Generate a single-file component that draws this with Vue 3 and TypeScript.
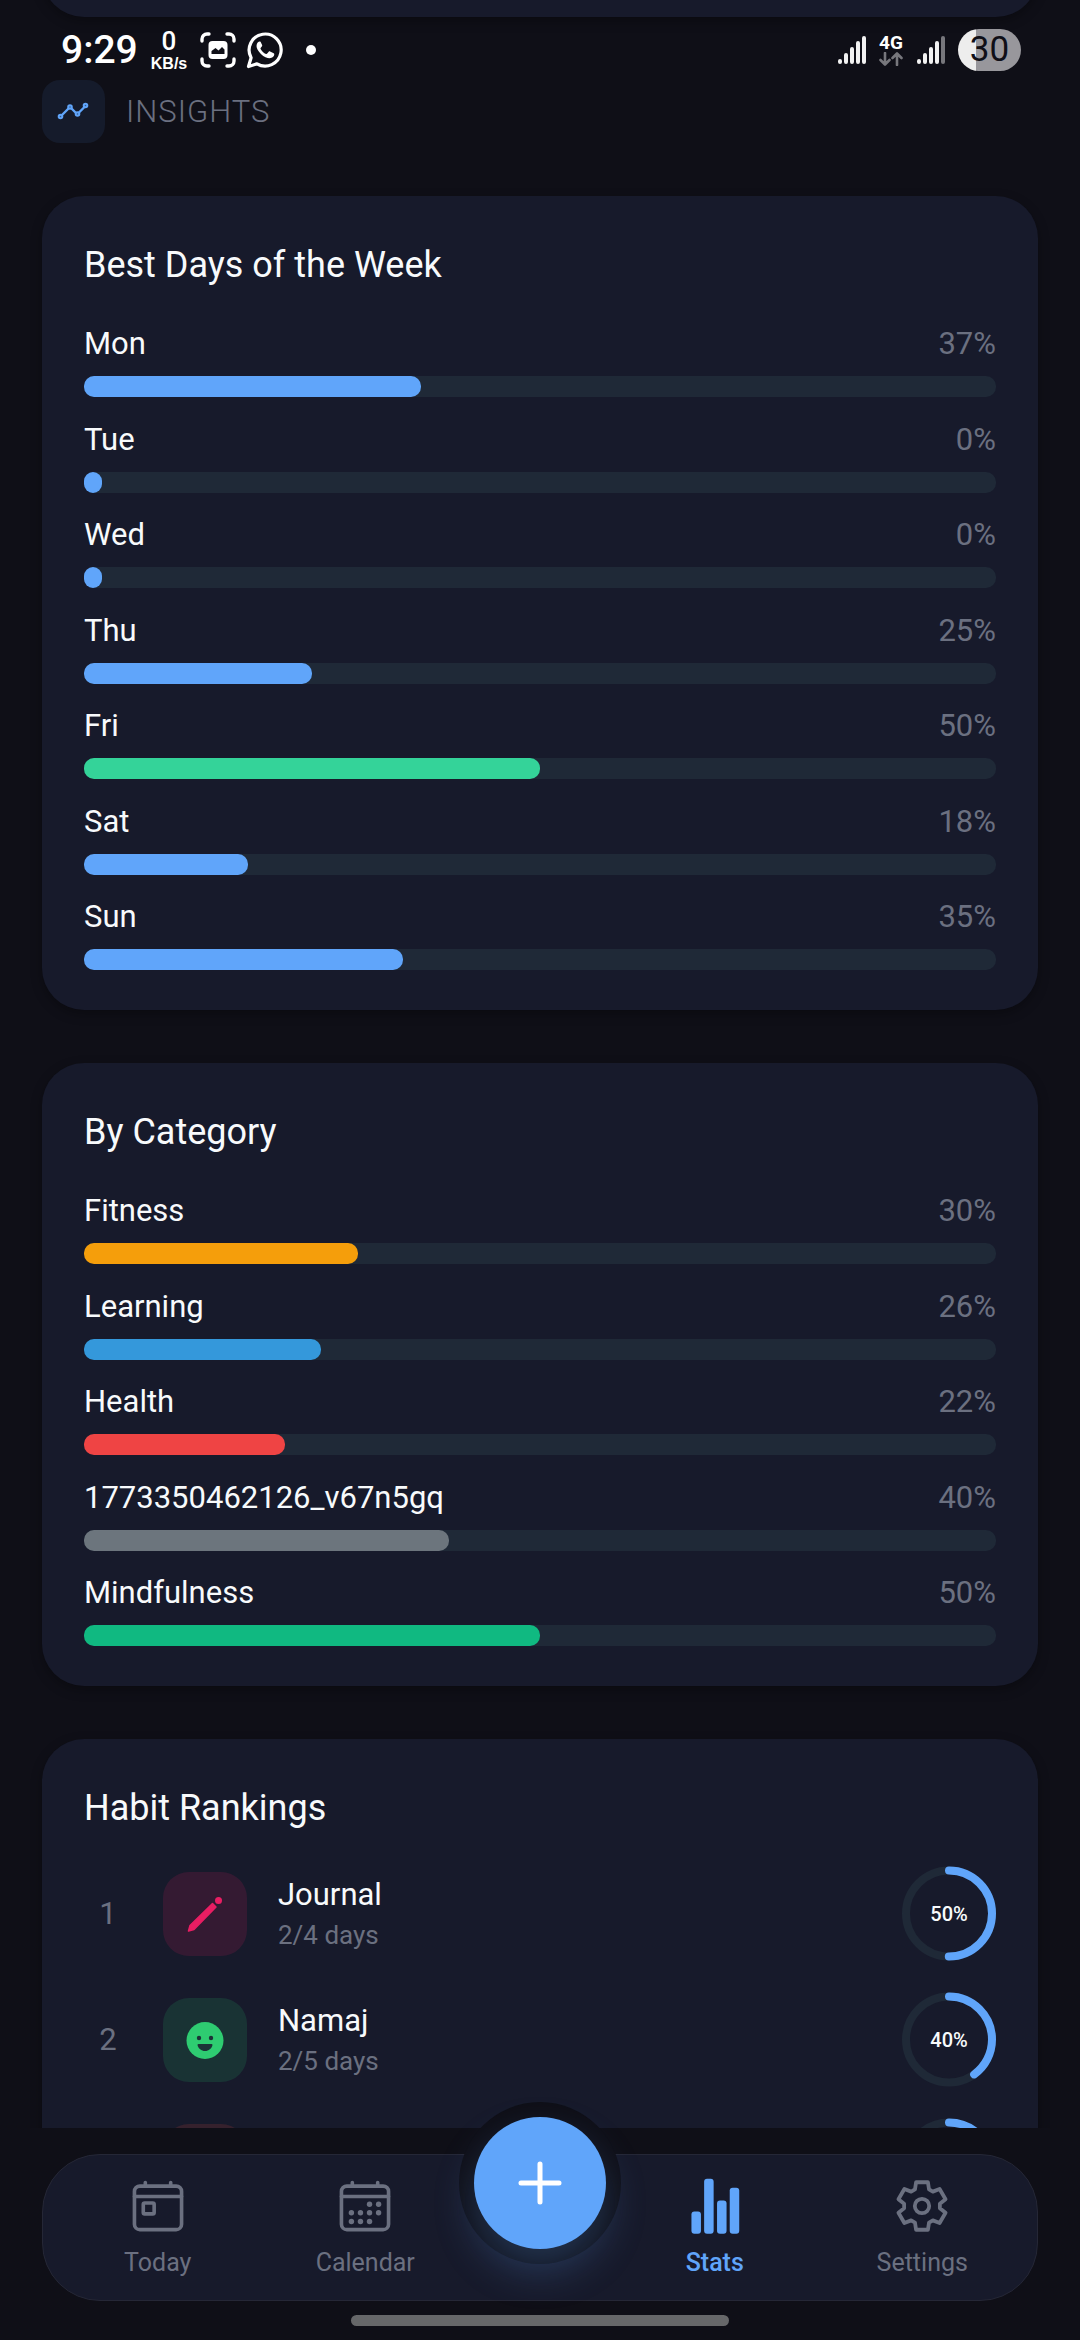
<script setup lang="ts">
interface Meter {
  label: string
  percent: number
  color: string
}

interface Habit {
  rank: number
  name: string
  detail: string
  percent: number
  tint: string
  icon: 'pencil' | 'smile' | 'none'
}

const weekdays: Meter[] = [
  { label: 'Mon', percent: 37, color: '#60a5fa' },
  { label: 'Tue', percent: 0, color: '#60a5fa' },
  { label: 'Wed', percent: 0, color: '#60a5fa' },
  { label: 'Thu', percent: 25, color: '#60a5fa' },
  { label: 'Fri', percent: 50, color: '#34d399' },
  { label: 'Sat', percent: 18, color: '#60a5fa' },
  { label: 'Sun', percent: 35, color: '#60a5fa' },
]

const categories: Meter[] = [
  { label: 'Fitness', percent: 30, color: '#f59e0b' },
  { label: 'Learning', percent: 26, color: '#3498db' },
  { label: 'Health', percent: 22, color: '#ef4444' },
  { label: '1773350462126_v67n5gq', percent: 40, color: '#6c757d' },
  { label: 'Mindfulness', percent: 50, color: '#10b981' },
]

const meterCards = [
  { title: 'Best Days of the Week', meters: weekdays },
  { title: 'By Category', meters: categories },
]

const habits: Habit[] = [
  { rank: 1, name: 'Journal', detail: '2/4 days', percent: 50, tint: 'rgba(233, 30, 99, 0.14)', icon: 'pencil' },
  { rank: 2, name: 'Namaj', detail: '2/5 days', percent: 40, tint: 'rgba(46, 204, 113, 0.14)', icon: 'smile' },
  { rank: 3, name: '', detail: '', percent: 33, tint: 'rgba(231, 76, 60, 0.15)', icon: 'none' },
]

// An empty day still shows a small stub of colour.
const barWidth = (percent: number): string => `${Math.max(percent, 2)}%`

const RING_LENGTH = 2 * Math.PI * 43
const ringDash = (percent: number): string => `${(RING_LENGTH * percent) / 100} ${RING_LENGTH}`

// Outline of a six-toothed cog centred on the origin.
const cogPoints: string = [0, 60, 120, 180, 240, 300]
  .flatMap((turn) =>
    [[-23, 18], [-14, 24.5], [14, 24.5], [23, 18]].map(([angle, radius]) => {
      const a = ((turn + angle) * Math.PI) / 180
      return `${(radius * Math.sin(a)).toFixed(2)},${(-radius * Math.cos(a)).toFixed(2)}`
    }),
  )
  .join(' ')
</script>

<template>
  <div class="app">
    <header class="status">
      <div class="status-side">
        <span class="clock">9:29</span>
        <span class="speed"><span class="speed-value">0</span><span class="speed-unit">KB/s</span></span>
        <svg class="capture" width="36" height="36" viewBox="0 0 36 36" aria-hidden="true">
          <g fill="none" stroke="#fff" stroke-width="3.4" stroke-linecap="round">
            <path d="M2 9V7a5 5 0 0 1 5-5h2M27 2h2a5 5 0 0 1 5 5v2M34 27v2a5 5 0 0 1-5 5h-2M9 34H7a5 5 0 0 1-5-5v-2" />
          </g>
          <rect x="8.500" y="9" width="19" height="18" rx="4" fill="#fff" />
          <path d="M11.500 22v-3l4-3 3 2.500 3.500-3.500 2.500 2.500V22z" fill="#0f0f17" />
        </svg>
        <svg class="chat" width="38" height="38" viewBox="0 0 38 38" aria-hidden="true">
          <path d="M2.500 35.500l2.600-8.800A16 16 0 1 1 11 32.800z" fill="none" stroke="#fff" stroke-width="3.200" stroke-linejoin="round" />
          <path d="M13.500 10.500c-.8 0-3 1.400-3 4.600 0 2.300 1.600 5.200 4.400 7.900 3 2.900 6.300 4.200 8.700 4.200 2.800 0 4.700-2 4.700-3.900 0-.6-.2-.9-.6-1.100l-3.600-1.800c-.6-.3-1-.2-1.400.3l-1.500 1.900c-.3.400-.7.500-1.200.3-2.100-.9-4.300-2.900-5.400-5-.2-.5-.2-.8.200-1.200l1.200-1.500c.3-.4.3-.8.100-1.300l-1.400-2.800c-.3-.5-.6-.6-1.200-.6z" fill="#fff" />
        </svg>
        <span class="dot"></span>
      </div>
      <div class="status-side">
        <svg width="29" height="30" viewBox="0 0 29 30" aria-hidden="true">
          <g stroke="#f2f2f2" stroke-width="4" stroke-linecap="round">
            <path d="M3 26v1M9 20v7M15 14v13M21 8v19M27 3v24" />
          </g>
        </svg>
        <span class="network">
          <span>4G</span>
          <svg width="24" height="14" viewBox="0 0 24 14" aria-hidden="true">
            <path d="M6 1v11M1.500 8L6 12.500 10.500 8M18 13V2M13.500 6L18 1.500 22.500 6" fill="none" stroke="#77777c" stroke-width="2.600" stroke-linecap="round" stroke-linejoin="round" />
          </svg>
        </span>
        <svg width="29" height="30" viewBox="0 0 29 30" aria-hidden="true">
          <g stroke="#f2f2f2" stroke-width="4" stroke-linecap="round">
            <path d="M3 26v1M9 20v7M15 14v13M21 8v19" />
            <path d="M27 3v24" stroke="#77777c" />
          </g>
        </svg>
        <span class="battery">30</span>
      </div>
    </header>

    <main class="scroll">
      <div class="card card-above"></div>

      <div class="section-head">
        <span class="section-icon">
          <svg width="63" height="63" viewBox="0 0 63 63" fill="#35598a" stroke="#60a5fa" stroke-width="2" aria-hidden="true">
            <path d="M20 35l6.500-6.500M29.500 28.500l4.500 4.500M37 32.500l5-5" stroke-width="2.400" stroke-linecap="round" />
            <circle cx="18.500" cy="36.500" r="1.800" />
            <circle cx="28" cy="27" r="1.800" />
            <circle cx="35.500" cy="34" r="1.800" />
            <circle cx="43.500" cy="25.500" r="1.800" />
          </svg>
        </span>
        <h1>INSIGHTS</h1>
      </div>

      <section v-for="card in meterCards" :key="card.title" class="card">
        <h2>{{ card.title }}</h2>
        <ul class="meters">
          <li v-for="meter in card.meters" :key="meter.label" class="meter">
            <div class="meter-text">
              <span>{{ meter.label }}</span>
              <span class="muted">{{ meter.percent }}%</span>
            </div>
            <div class="track" role="progressbar" :aria-label="meter.label" :aria-valuenow="meter.percent">
              <div class="fill" :style="{ width: barWidth(meter.percent), background: meter.color }"></div>
            </div>
          </li>
        </ul>
      </section>

      <section class="card">
        <h2>Habit Rankings</h2>
        <ol class="habits">
          <li v-for="habit in habits" :key="habit.rank" class="habit">
            <span class="rank muted">{{ habit.name ? habit.rank : '' }}</span>
            <span class="tile" :style="{ background: habit.tint }">
              <svg v-if="habit.icon === 'pencil'" width="84" height="84" viewBox="0 0 84 84" fill="#e91e63" aria-hidden="true">
                <path d="M25.500 59l1.500-5.500L49.500 31.500l3.500 3.500L31 57.500z" stroke="#e91e63" stroke-width="1.500" stroke-linejoin="round" />
                <circle cx="55.500" cy="28.500" r="3.500" />
              </svg>
              <svg v-else-if="habit.icon === 'smile'" width="84" height="84" viewBox="0 0 84 84" aria-hidden="true">
                <circle cx="42" cy="42.500" r="18.500" fill="#2ecc71" />
                <g fill="#1c3337">
                  <circle cx="36" cy="40" r="2.200" />
                  <circle cx="48" cy="40" r="2.200" />
                  <path d="M35.500 46h13a1 1 0 0 1 1 1c-.8 3.500-3.800 6-7.500 6s-6.700-2.500-7.500-6a1 1 0 0 1 1-1z" />
                </g>
              </svg>
            </span>
            <div class="habit-text">
              <span class="habit-name">{{ habit.name }}</span>
              <span class="habit-detail muted">{{ habit.detail }}</span>
            </div>
            <div class="ring">
              <svg width="94" height="95" viewBox="0 0 94 95" fill="none" stroke-width="8" aria-hidden="true">
                <circle cx="47" cy="47.500" r="43" stroke="#1f2937" />
                <circle cx="47" cy="47.500" r="43" stroke="#60a5fa" stroke-linecap="round" :stroke-dasharray="ringDash(habit.percent)" transform="rotate(-90 47 47.500)" />
              </svg>
              <span v-if="habit.name" class="ring-text">{{ habit.percent }}%</span>
            </div>
          </li>
        </ol>
      </section>
    </main>

    <footer class="bottom">
      <nav class="tabs">
        <a href="#today" class="tab">
          <svg width="58" height="58" viewBox="0 0 512 512" fill="none" stroke="currentColor" stroke-width="32" stroke-linejoin="round" aria-hidden="true">
            <rect x="48" y="80" width="416" height="384" rx="48" />
            <rect x="126" y="230" width="96" height="96" rx="13" />
            <path d="M144 48v32M368 48v32M464 172H48" stroke-linecap="round" />
          </svg>
          <span>Today</span>
        </a>
        <a href="#calendar" class="tab">
          <svg width="58" height="58" viewBox="0 0 512 512" fill="none" stroke="currentColor" stroke-width="32" stroke-linejoin="round" aria-hidden="true">
            <rect x="48" y="80" width="416" height="384" rx="48" />
            <path d="M144 48v32M368 48v32M464 172H48" stroke-linecap="round" />
            <g fill="currentColor" stroke="none">
              <circle cx="296" cy="240" r="24" /><circle cx="376" cy="240" r="24" />
              <circle cx="136" cy="316" r="24" /><circle cx="216" cy="316" r="24" /><circle cx="296" cy="316" r="24" /><circle cx="376" cy="316" r="24" />
              <circle cx="136" cy="392" r="24" /><circle cx="216" cy="392" r="24" /><circle cx="296" cy="392" r="24" />
            </g>
          </svg>
          <span>Calendar</span>
        </a>
        <div class="add-slot">
          <div class="add-rim">
            <button type="button" class="add" aria-label="Add habit">
              <svg width="44" height="44" viewBox="0 0 44 44" stroke="#fff" stroke-width="5" stroke-linecap="round" aria-hidden="true">
                <path d="M22 3v38M3 22h38" />
              </svg>
            </button>
          </div>
        </div>
        <a href="#stats" class="tab active" aria-current="page">
          <svg width="58" height="58" viewBox="0 0 512 512" fill="currentColor" aria-hidden="true">
            <rect x="48" y="304" width="84" height="196" rx="26" />
            <rect x="160" y="16" width="84" height="484" rx="26" />
            <rect x="274" y="208" width="84" height="292" rx="26" />
            <rect x="386" y="94" width="84" height="406" rx="26" />
          </svg>
          <span>Stats</span>
        </a>
        <a href="#settings" class="tab">
          <svg width="58" height="58" viewBox="-29 -29 58 58" fill="none" stroke="currentColor" stroke-width="3.800" stroke-linejoin="round" aria-hidden="true">
            <polygon :points="cogPoints" />
            <circle cx="0" cy="0" r="7.200" />
          </svg>
          <span>Settings</span>
        </a>
      </nav>
      <div class="home-bar"></div>
    </footer>
  </div>
</template>

<style>
body {
  margin: 0;
  background: #0f0f17;
}
</style>

<style scoped>
.app {
  position: relative;
  display: flex;
  flex-direction: column;
  height: 100vh;
  overflow: hidden;
  background: #0f0f17;
  color: #f8fafc;
  font-family: Roboto, "Noto Sans", sans-serif;
  font-size: 31px;
}

.muted {
  color: #6b7080;
}

/* Status bar, laid over the scrolling page */
.status {
  position: absolute;
  z-index: 2;
  top: 29px;
  left: 0;
  right: 0;
  display: flex;
  justify-content: space-between;
  padding: 0 59px 0 61px;
  color: #fff;
}

.status-side {
  display: flex;
  align-items: center;
  gap: 13px;
  height: 42px;
}

.clock {
  font-size: 39px;
  font-weight: 500;
  line-height: 42px;
}

.speed {
  display: flex;
  flex-direction: column;
  align-items: center;
}

.speed-value {
  font-size: 26px;
  font-weight: 500;
  line-height: 27px;
}

.speed-unit {
  font-family: "Liberation Sans", sans-serif;
  font-size: 16px;
  font-weight: 700;
  line-height: 17px;
}

.chat {
  margin-left: -3px;
}

.dot {
  width: 10px;
  height: 10px;
  margin-left: 9px;
  border-radius: 50%;
  background: #fff;
}

.network {
  display: flex;
  flex-direction: column;
  align-items: center;
  font-size: 19px;
  font-weight: 700;
  line-height: 18px;
}

.battery {
  width: 63px;
  height: 42px;
  border-radius: 21px;
  background: linear-gradient(90deg, #ededed 18px, #98979c 18px);
  color: #0f0f17;
  font-size: 35px;
  line-height: 42px;
  text-align: center;
}

/* Page */
.scroll {
  flex: 1;
  min-height: 0;
  overflow: hidden;
  padding: 0 42px;
}

.section-head {
  display: flex;
  align-items: center;
  gap: 21px;
  margin: 63px 0 53px;
}

.section-icon {
  width: 63px;
  height: 63px;
  border-radius: 18px;
  background: #151b2b;
}

h1 {
  margin: 0;
  color: #6b7080;
  font-size: 31px;
  font-weight: 300;
  line-height: 42px;
  letter-spacing: 1px;
}

.card {
  margin-bottom: 53px;
  padding: 44px 42px 40px;
  border-radius: 42px;
  background: #171a2b;
  box-shadow: 0 4px 12px rgba(0, 0, 0, 0.3);
}

.card-above {
  height: 60px;
  margin-top: -127px;
}

h2 {
  margin: 0 0 33px;
  font-size: 36px;
  font-weight: 400;
  line-height: 50px;
}

.meters,
.habits {
  margin: 0;
  padding: 0;
  list-style: none;
}

.meter + .meter {
  margin-top: 21px;
}

.meter:nth-child(even) {
  margin-top: 22px;
}

.meter-text {
  display: flex;
  justify-content: space-between;
  margin-bottom: 11px;
  line-height: 42px;
}

.track {
  height: 21px;
  border-radius: 10px;
  background: #1f2937;
}

.fill {
  height: 100%;
  border-radius: 10px;
}

.habits {
  display: flex;
  flex-direction: column;
  gap: 31px;
}

.habit {
  display: flex;
  align-items: center;
  gap: 31px;
}

.rank {
  width: 48px;
  text-align: center;
}

.tile {
  width: 84px;
  height: 84px;
  border-radius: 26px;
}

.habit-text {
  display: flex;
  flex: 1;
  flex-direction: column;
}

.habit-name {
  line-height: 42px;
}

.habit-detail {
  font-size: 26px;
  line-height: 38px;
}

.ring {
  display: grid;
  place-items: center;
}

.ring > * {
  grid-area: 1 / 1;
}

.ring-text {
  font-size: 20px;
  font-weight: 500;
}

/* Bottom navigation */
.bottom {
  position: relative;
  display: flex;
  flex-direction: column;
  align-items: center;
  gap: 14px;
  padding: 26px 42px 14px;
}

.tabs {
  display: flex;
  align-items: center;
  align-self: stretch;
  box-sizing: border-box;
  height: 147px;
  padding: 0 11px;
  border: 1px solid #252736;
  border-radius: 58px;
  background: #171a2b;
}

.tab {
  display: flex;
  flex: 1;
  flex-direction: column;
  align-items: center;
  gap: 12px;
  color: #6b7080;
  font-size: 25px;
  line-height: 32px;
  text-decoration: none;
}

.active {
  color: #60a5fa;
  font-weight: 500;
}

.add-slot {
  display: flex;
  justify-content: center;
  width: 142px;
}

/* The add button rises over the top edge of the bar */
.add-rim {
  flex: none;
  box-sizing: border-box;
  width: 162px;
  height: 162px;
  margin-top: -90px;
  padding: 15px;
  border-radius: 50%;
  background: #0f0f17;
}

.add {
  display: flex;
  align-items: center;
  justify-content: center;
  width: 132px;
  height: 132px;
  padding: 0;
  border: 0;
  border-radius: 50%;
  background: #60a5fa;
  box-shadow: 0 20px 40px rgba(96, 165, 250, 0.25);
}

.home-bar {
  width: 378px;
  height: 11px;
  border-radius: 6px;
  background: #666769;
}
</style>
